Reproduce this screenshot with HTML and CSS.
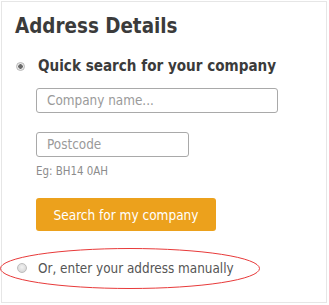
FILE: index.html
```html
<!DOCTYPE html>
<html>
<head>
<meta charset="utf-8">
<link rel="stylesheet" href="styles.css">
</head>
<body>
<div class="panel">
  <h1 class="title">Address Details</h1>
  <label class="option option-main">
    <span class="radio radio-on"></span>
    <span class="option-label">Quick search for your company</span>
  </label>
  <div class="fields">
    <div class="field field-wide"><span class="placeholder">Company name...</span></div>
    <div class="field field-narrow"><span class="placeholder">Postcode</span></div>
    <div class="hint">Eg: BH14 0AH</div>
    <div class="btn">Search for my company</div>
  </div>
  <div class="manual">
    <svg class="ring" width="261" height="42" viewBox="0 0 261 42"><ellipse cx="130" cy="20.5" rx="129.5" ry="20" fill="none" stroke="#e83a3a" stroke-width="1"/></svg>
    <span class="radio radio-off"></span>
    <span class="manual-label">Or, enter your address manually</span>
  </div>
</div>
</body>
</html>
```

FILE: styles.css
```css
html, body { margin: 0; padding: 0; background: #fff; }
body { font-family: "DejaVu Sans Condensed", "DejaVu Sans", Verdana, sans-serif; }
.panel {
  margin: 1px 2px 0 1px;
  width: 326px;
  height: 302px;
  border: 1px solid #e6e6e6;
  box-sizing: border-box;
  padding: 0 0 0 13px;
}
.title {
  margin: 12px 0 0 0;
  font-size: 20.4px;
  line-height: 24px;
  font-weight: bold;
  color: #3b3b3b;
}
.option {
  display: flex;
  align-items: center;
  margin-top: 19px;
  height: 18px;
}
.radio {
  display: inline-block;
  box-sizing: border-box;
  width: 9px; height: 9px;
  border-radius: 50%;
}
.radio-on {
  margin-left: 1px;
  border: 1px solid #b8b8b8;
  background: radial-gradient(circle, #6a6a6a 0 2px, #e9e9e9 2.5px);
}
.option-label {
  margin-left: 13px;
  font-size: 15.1px;
  font-weight: bold;
  color: #3b3b3b;
}
.fields { padding-left: 21px; margin-top: 13px; }
.field {
  box-sizing: border-box;
  height: 25px;
  border: 1px solid #a9a9a9;
  border-radius: 3px;
  padding-left: 10px;
  display: flex;
  align-items: center;
}
.field-wide { width: 242px; }
.field-narrow { width: 153px; margin-top: 19px; }
.placeholder { font-size: 13.4px; color: #9a9a9a; }
.hint { margin-top: 7px; font-size: 11.4px; color: #8c8c8c; line-height: 14px; }
.btn {
  margin-top: 20px;
  width: 180px; height: 33px;
  box-sizing: border-box;
  background: #eca11c;
  border-radius: 3px;
  color: #fff;
  font-size: 13.5px;
  display: flex; align-items: center; justify-content: center;
}
.manual {
  position: relative;
  margin: 17px 0 0 -13px;
  height: 40px;
  display: flex;
  align-items: center;
  padding-left: 15px;
}
.ring { position: absolute; left: -2px; top: 0; }
.radio-off {
  width: 10px; height: 10px;
  border: 1px solid #bdbdbd;
  background: radial-gradient(circle at 50% 40%, #f2f2f2, #cfcfcf);
}
.manual-label { margin-left: 11px; font-size: 13.4px; color: #555; }
```
